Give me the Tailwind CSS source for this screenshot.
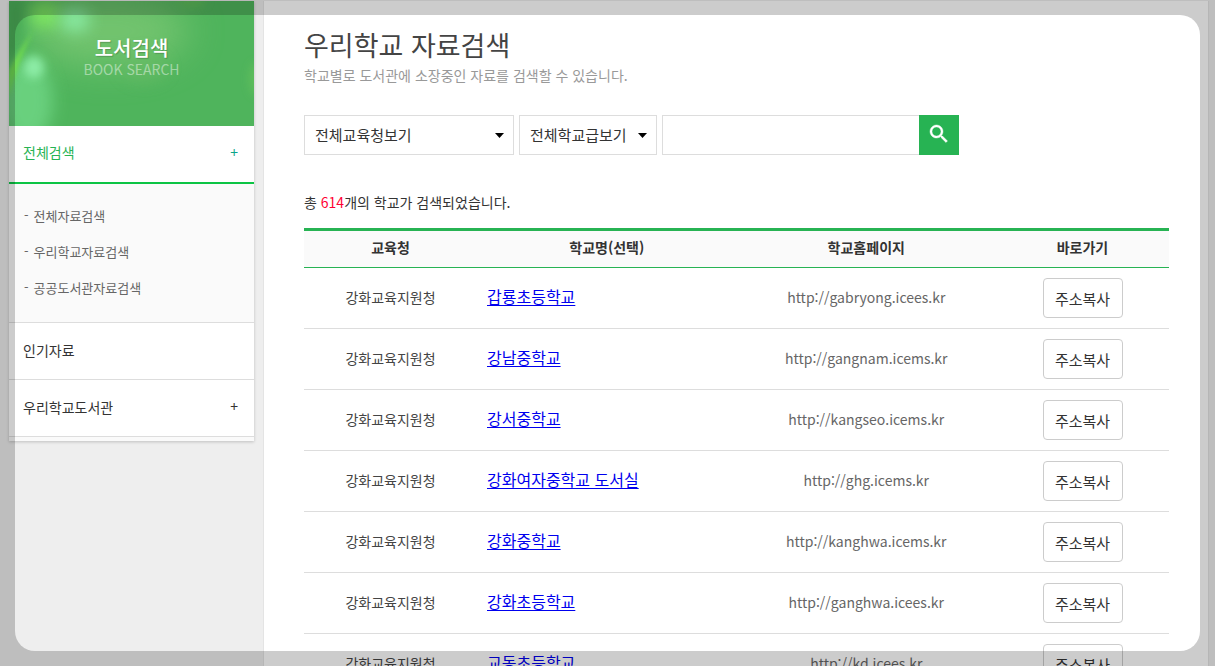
<!DOCTYPE html>
<html lang="ko" class="[scrollbar-width:none]">
<head>
<meta charset="utf-8">
<meta name="viewport" content="width=device-width, initial-scale=1">
<title>우리학교 자료검색</title>
<script src="https://cdn.jsdelivr.net/npm/@tailwindcss/browser@4"></script>
</head>
<body class="min-h-screen bg-[#eee] pt-px pr-1.5 pl-[9px] font-['Noto_Sans_CJK_KR',sans-serif] text-sm leading-5 text-[#333]">
<div class="flex gap-[9px]">
  <aside class="w-[245px] shrink-0 self-start bg-[#fafafa] pb-1 shadow-[0_1px_3px_rgba(0,0,0,0.2)]">
    <div class="relative h-[125px] overflow-hidden bg-[#4fb45c] pt-[34px] text-center">
      <svg class="absolute inset-0 h-full w-full" viewBox="0 0 245 125" preserveAspectRatio="none" aria-hidden="true">
        <defs>
          <filter id="b1" x="-200%" y="-200%" width="500%" height="500%"><feGaussianBlur stdDeviation="8"/></filter>
          <filter id="b2" x="-100%" y="-100%" width="300%" height="300%"><feGaussianBlur stdDeviation="18"/></filter>
          <filter id="b3" x="-100%" y="-100%" width="300%" height="300%"><feGaussianBlur stdDeviation="2"/></filter>
          <filter id="b4" x="-200%" y="-200%" width="500%" height="500%"><feGaussianBlur stdDeviation="5"/></filter>
        </defs>
        <ellipse cx="100" cy="30" rx="80" ry="36" fill="#7cc873" opacity=".8" filter="url(#b2)"/>
        <ellipse cx="135" cy="66" rx="22" ry="14" fill="#6cbc66" opacity=".5" filter="url(#b1)"/>
        <ellipse cx="183" cy="0" rx="14" ry="5" fill="#6cc254" opacity=".6" filter="url(#b4)"/>
        <ellipse cx="247" cy="78" rx="6" ry="16" fill="#66c25c" opacity=".8" filter="url(#b4)"/>
        <ellipse cx="36" cy="14" rx="15" ry="13" fill="#84ee60" opacity=".85" filter="url(#b1)"/>
        <ellipse cx="66" cy="19" rx="15" ry="12" fill="#90f4b0" opacity=".8" filter="url(#b1)"/>
        <ellipse cx="18" cy="100" rx="26" ry="42" fill="#74dc8c" opacity=".7" filter="url(#b1)"/>
        <ellipse cx="25" cy="66" rx="10" ry="11" fill="#98f6b4" opacity=".8" filter="url(#b4)"/>
        <path d="M0 0H14V36L0 60Z" fill="#45a552" opacity=".6" filter="url(#b4)"/>
        <path d="M24 30Q10 50 0 70V96Q8 62 24 30Z" fill="#74e04c" opacity=".9" filter="url(#b3)"/>
      </svg>
      <h2 class="relative text-xl leading-[25px] font-medium text-white [text-shadow:1px_1px_1px_rgba(0,0,0,0.2)]">도서검색</h2>
      <p class="relative leading-[18px] text-white/45">BOOK SEARCH</p>
    </div>
    <nav aria-label="도서검색">
      <a href="#" class="flex h-[58px] items-center justify-between border-b-2 border-[#0cc444] bg-white pr-4 pb-1 pl-3.5 text-[#27b353]"><span>전체검색</span><span class="text-[#0aa68a]">+</span></a>
      <ul class="border-b border-[#ddd] pt-3.5 pb-4 pl-[15px] text-[13px] text-[#666]">
        <li class="flex h-9 items-center gap-[5px]"><span aria-hidden="true" class="pb-0.5">-</span><a href="#">전체자료검색</a></li>
        <li class="flex h-9 items-center gap-[5px]"><span aria-hidden="true" class="pb-0.5">-</span><a href="#">우리학교자료검색</a></li>
        <li class="flex h-9 items-center gap-[5px]"><span aria-hidden="true" class="pb-0.5">-</span><a href="#">공공도서관자료검색</a></li>
      </ul>
      <a href="#" class="flex h-[57px] items-center border-b border-[#ddd] bg-white pb-0.5 pl-3.5">인기자료</a>
      <a href="#" class="flex h-[57px] items-center justify-between border-b border-[#ddd] bg-white pr-4 pb-0.5 pl-3.5"><span>우리학교도서관</span><span class="pb-0.5">+</span></a>
    </nav>
  </aside>

  <main class="min-w-0 flex-1 border-r border-l border-[#e4e4e4] bg-white pr-[39px] pl-10">
    <h1 class="pt-6 text-[27px] leading-10 text-[#444]">우리학교 자료검색</h1>
    <p class="text-[#999]">학교별로 도서관에 소장중인 자료를 검색할 수 있습니다.</p>

    <form class="mt-[30px] flex gap-[5px]" onsubmit="return false">
      <div class="relative">
        <select aria-label="교육청" class="h-10 w-[210px] appearance-none border border-[#ddd] bg-white pl-2.5 text-[15px] text-[#333]"><option>전체교육청보기</option></select>
        <svg class="pointer-events-none absolute top-[18px] right-2.5 h-[5px] w-[9px]" viewBox="0 0 9 5" aria-hidden="true"><path d="M0 0h9L4.500 5z" fill="#000"/></svg>
      </div>
      <div class="relative">
        <select aria-label="학교급" class="h-10 w-[138px] appearance-none border border-[#ddd] bg-white pl-2.5 text-[15px] text-[#333]"><option>전체학교급보기</option></select>
        <svg class="pointer-events-none absolute top-[18px] right-2.5 h-[5px] w-[9px]" viewBox="0 0 9 5" aria-hidden="true"><path d="M0 0h9L4.500 5z" fill="#000"/></svg>
      </div>
      <div class="flex">
        <input type="text" aria-label="검색어" class="h-10 w-[257px] border border-r-0 border-[#ddd] px-2.5">
        <button type="submit" aria-label="검색" class="flex size-10 justify-center bg-[#27b353] pt-[7px]">
          <svg class="size-6" viewBox="0 0 24 24" fill="#fff" aria-hidden="true"><path d="M15.500 14h-.79l-.28-.27A6.500 6.500 0 1 0 13.730 14.430l.27.28v.79l5 4.990L20.490 19zm-6 0a4.500 4.500 0 1 1 0-9 4.500 4.500 0 0 1 0 9z" stroke="#fff" stroke-width=".4"/></svg>
        </button>
      </div>
    </form>

    <p class="mt-[37px]">총 <span class="text-[#ff0033]">614</span>개의 학교가 검색되었습니다.</p>

    <table class="mt-4 w-full table-fixed border-separate border-spacing-0 text-center">
      <colgroup><col class="w-1/5"><col class="w-[30%]"><col class="w-[30%]"><col class="w-1/5"></colgroup>
      <thead>
        <tr class="h-10 bg-[#fafafa] *:border-t-3 *:border-b *:border-t-[#27b353] *:border-b-[#27b353] *:pb-1 *:font-bold">
          <th scope="col">교육청</th><th scope="col">학교명(선택)</th><th scope="col">학교홈페이지</th><th scope="col">바로가기</th>
        </tr>
      </thead>
      <tbody id="rows"></tbody>
    </table>
  </main>
</div>
<div class="pointer-events-none fixed inset-[15px] rounded-[20px] shadow-[0_0_0_40px_rgba(0,0,0,0.2)]"></div>

<template id="row">
  <tr class="h-[61px] *:border-b *:border-[#ddd]">
    <td class="pb-[3px] text-[#444]">강화교육지원청</td>
    <td class="pb-[3px] text-left"><a href="#" class="ml-2.5 text-base leading-5 text-[#0000ee] underline underline-offset-2"></a></td>
    <td class="pb-[3px] text-[#666]"></td>
    <td><button type="button" class="h-10 w-20 rounded border border-[#ccc] bg-white pt-0.5 align-middle text-[15px] text-[#333]">주소복사</button></td>
  </tr>
</template>
<script>
const schools = [
  ['갑룡초등학교', 'http://gabryong.icees.kr'],
  ['강남중학교', 'http://gangnam.icems.kr'],
  ['강서중학교', 'http://kangseo.icems.kr'],
  ['강화여자중학교 도서실', 'http://ghg.icems.kr'],
  ['강화중학교', 'http://kanghwa.icems.kr'],
  ['강화초등학교', 'http://ganghwa.icees.kr'],
  ['교동초등학교', 'http://kd.icees.kr'],
];
const body = document.getElementById('rows');
for (const [name, url] of schools) {
  const row = document.getElementById('row').content.cloneNode(true);
  row.querySelector('a').textContent = name;
  row.querySelectorAll('td')[2].textContent = url;
  body.append(row);
}
</script>
</body>
</html>
